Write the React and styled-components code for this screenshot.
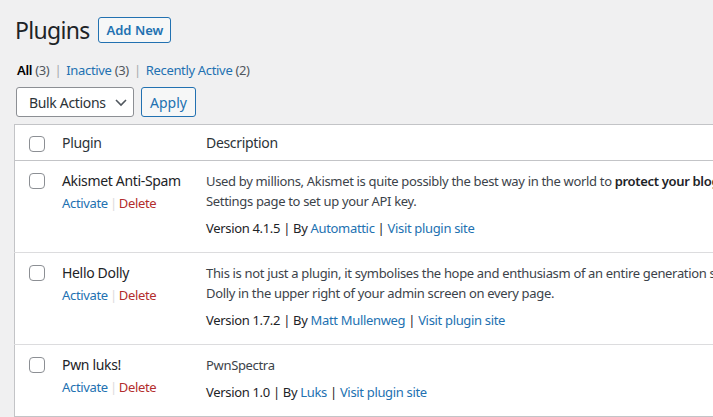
import React from "react";
import styled, { createGlobalStyle } from "styled-components";

const GlobalStyle = createGlobalStyle`
  html, body {
    margin: 0;
    padding: 0;
    background: #f0f0f1;
    overflow: hidden;
  }
  body {
    font-family: "Noto Sans", "Open Sans", sans-serif;
    font-size: 13px;
    letter-spacing: -0.33px;
    color: #3c434a;
  }
`;

const plugins = [
  {
    name: "Akismet Anti-Spam",
    lines: [
      <>
        Used by millions, Akismet is quite possibly the best way in the world to{" "}
        <strong>protect your blog from spam</strong>. It keeps your site protected even while you sleep. To get
        started: activate the Akismet plugin and then go to your Akismet
      </>,
      "Settings page to set up your API key.",
    ],
    version: "4.1.5",
    author: "Automattic",
  },
  {
    name: "Hello Dolly",
    lines: [
      "This is not just a plugin, it symbolises the hope and enthusiasm of an entire generation summed up in two words sung most famously by Louis Armstrong: Hello, Dolly. When activated you will randomly see a lyric from Hello,",
      "Dolly in the upper right of your admin screen on every page.",
    ],
    version: "1.7.2",
    author: "Matt Mullenweg",
  },
  {
    name: "Pwn luks!",
    lines: ["PwnSpectra"],
    version: "1.0",
    author: "Luks",
  },
];

export default function App() {
  return (
    <>
      <GlobalStyle />
      <SWrap>
        <SHeader>
          <STitle>Plugins</STitle>
          <SOutlineButton>Add New</SOutlineButton>
        </SHeader>
        <SFilters>
          <SFilter current>
            All <SCount>(3)</SCount>
          </SFilter>
          <SSep>|</SSep>
          <SFilter>
            Inactive <SCount>(3)</SCount>
          </SFilter>
          <SSep>|</SSep>
          <SFilter>
            Recently Active <SCount>(2)</SCount>
          </SFilter>
        </SFilters>
        <SActions>
          <SSelect>
            Bulk Actions
            <svg width="20" height="20" viewBox="0 0 20 20">
              <path d="M5 8l5 5 5-5" fill="none" stroke="#50575e" strokeWidth="1.6" />
            </svg>
          </SSelect>
          <SApply>Apply</SApply>
        </SActions>
        <STable>
          <thead>
            <tr>
              <SCheckCell as="td" header>
                <SCheckbox />
              </SCheckCell>
              <SHeadCell style={{ width: 124 }}>Plugin</SHeadCell>
              <SHeadCell>Description</SHeadCell>
            </tr>
          </thead>
          <tbody>
            {plugins.map((p) => (
              <SRow key={p.name}>
                <SCheckCell>
                  <SCheckbox />
                </SCheckCell>
                <SCell>
                  <SPluginName>{p.name}</SPluginName>
                  <SRowActions>
                    <SLink>Activate</SLink>
                    <SActionSep>|</SActionSep>
                    <SLink danger>Delete</SLink>
                  </SRowActions>
                </SCell>
                <SCell>
                  <SDesc>
                    {p.lines.map((l, i) => (
                      <SLine key={i}>{l}</SLine>
                    ))}
                  </SDesc>
                  <SMeta>
                    Version {p.version} | By <SLink>{p.author}</SLink> | <SLink>Visit plugin site</SLink>
                  </SMeta>
                </SCell>
              </SRow>
            ))}
          </tbody>
        </STable>
      </SWrap>
    </>
  );
}

const SWrap = styled.div`
  padding: 0 0 0 14px;
`;

const SHeader = styled.div`
  display: flex;
  align-items: center;
  gap: 9px;
  padding-top: 17px;
`;

const STitle = styled.h1`
  margin: 0 0 0 1px;
  font-size: 23px;
  font-weight: 400;
  line-height: 26px;
  letter-spacing: -0.7px;
  color: #1d2327;
`;

const SOutlineButton = styled.button`
  font: inherit;
  font-size: 13px;
  font-weight: 600;
  height: 26px;
  padding: 0 7px;
  color: #2271b1;
  background: #f6f7f7;
  border: 1px solid #2271b1;
  border-radius: 3px;
  line-height: 24px;
`;

const SFilters = styled.div`
  display: flex;
  align-items: center;
  gap: 5px;
  margin: 19px 0 0 3px;
  line-height: 16px;
`;

const SFilter = styled.span`
  color: ${(p) => (p.current ? "#000" : "#2271b1")};
  font-weight: ${(p) => (p.current ? 600 : 400)};
`;

const SCount = styled.span`
  color: #50575e;
  font-weight: 400;
`;

const SSep = styled.span`
  color: #a7aaad;
`;

const SActions = styled.div`
  display: flex;
  gap: 7px;
  margin: 9px 0 0 2px;
`;

const SSelect = styled.div`
  box-sizing: border-box;
  width: 118px;
  height: 30px;
  display: flex;
  align-items: center;
  justify-content: space-between;
  padding: 0 2px 0 12px;
  font-size: 14px;
  color: #2c3338;
  background: #fff;
  border: 1px solid #8c8f94;
  border-radius: 3px;
`;

const SApply = styled.button`
  font: inherit;
  font-size: 14px;
  height: 30px;
  padding: 0 8px;
  color: #2271b1;
  background: #f6f7f7;
  border: 1px solid #2271b1;
  border-radius: 3px;
`;

const STable = styled.table`
  margin-top: 7px;
  width: 1000px;
  border-collapse: collapse;
  background: #fff;
  border: 1px solid #c3c4c7;
  table-layout: fixed;
`;

const SHeadCell = styled.th`
  text-align: left;
  font-weight: 400;
  font-size: 14px;
  color: #2c3338;
  padding: 8px 10px 7px;
  line-height: 20px;
  border-bottom: 1px solid #c3c4c7;
`;

const SRow = styled.tr`
  & + & > * {
    border-top: 1px solid #dcdcde;
  }
`;

const SCheckCell = styled.th`
  width: 23px;
  padding: ${(p) => (p.header ? "11px 0 0 14px" : "12px 0 0 14px")};
  vertical-align: top;
  text-align: left;
  ${(p) => p.header && "border-bottom: 1px solid #c3c4c7;"}
`;

const SCheckbox = styled.span`
  display: block;
  box-sizing: border-box;
  width: 16px;
  height: 16px;
  border: 1px solid #8c8f94;
  border-radius: 4px;
  background: #fff;
`;

const SCell = styled.td`
  vertical-align: top;
  padding: 10px 10px 14px;
  line-height: 20px;
`;

const SPluginName = styled.div`
  font-size: 14px;
  color: #1d2327;
  white-space: nowrap;
`;

const SRowActions = styled.div`
  margin-top: 2px;
  white-space: nowrap;
`;

const SActionSep = styled.span`
  color: #dcdcde;
  margin: 0 2px;
`;

const SLink = styled.span`
  color: ${(p) => (p.danger ? "#b32d2e" : "#2271b1")};
`;

const SDesc = styled.div`
  margin-bottom: 7px;
`;

const SLine = styled.div`
  white-space: nowrap;
  strong {
    font-weight: 600;
    color: #1d2327;
  }
`;

const SMeta = styled.div`
  color: #1d2327;
  white-space: nowrap;
`;
